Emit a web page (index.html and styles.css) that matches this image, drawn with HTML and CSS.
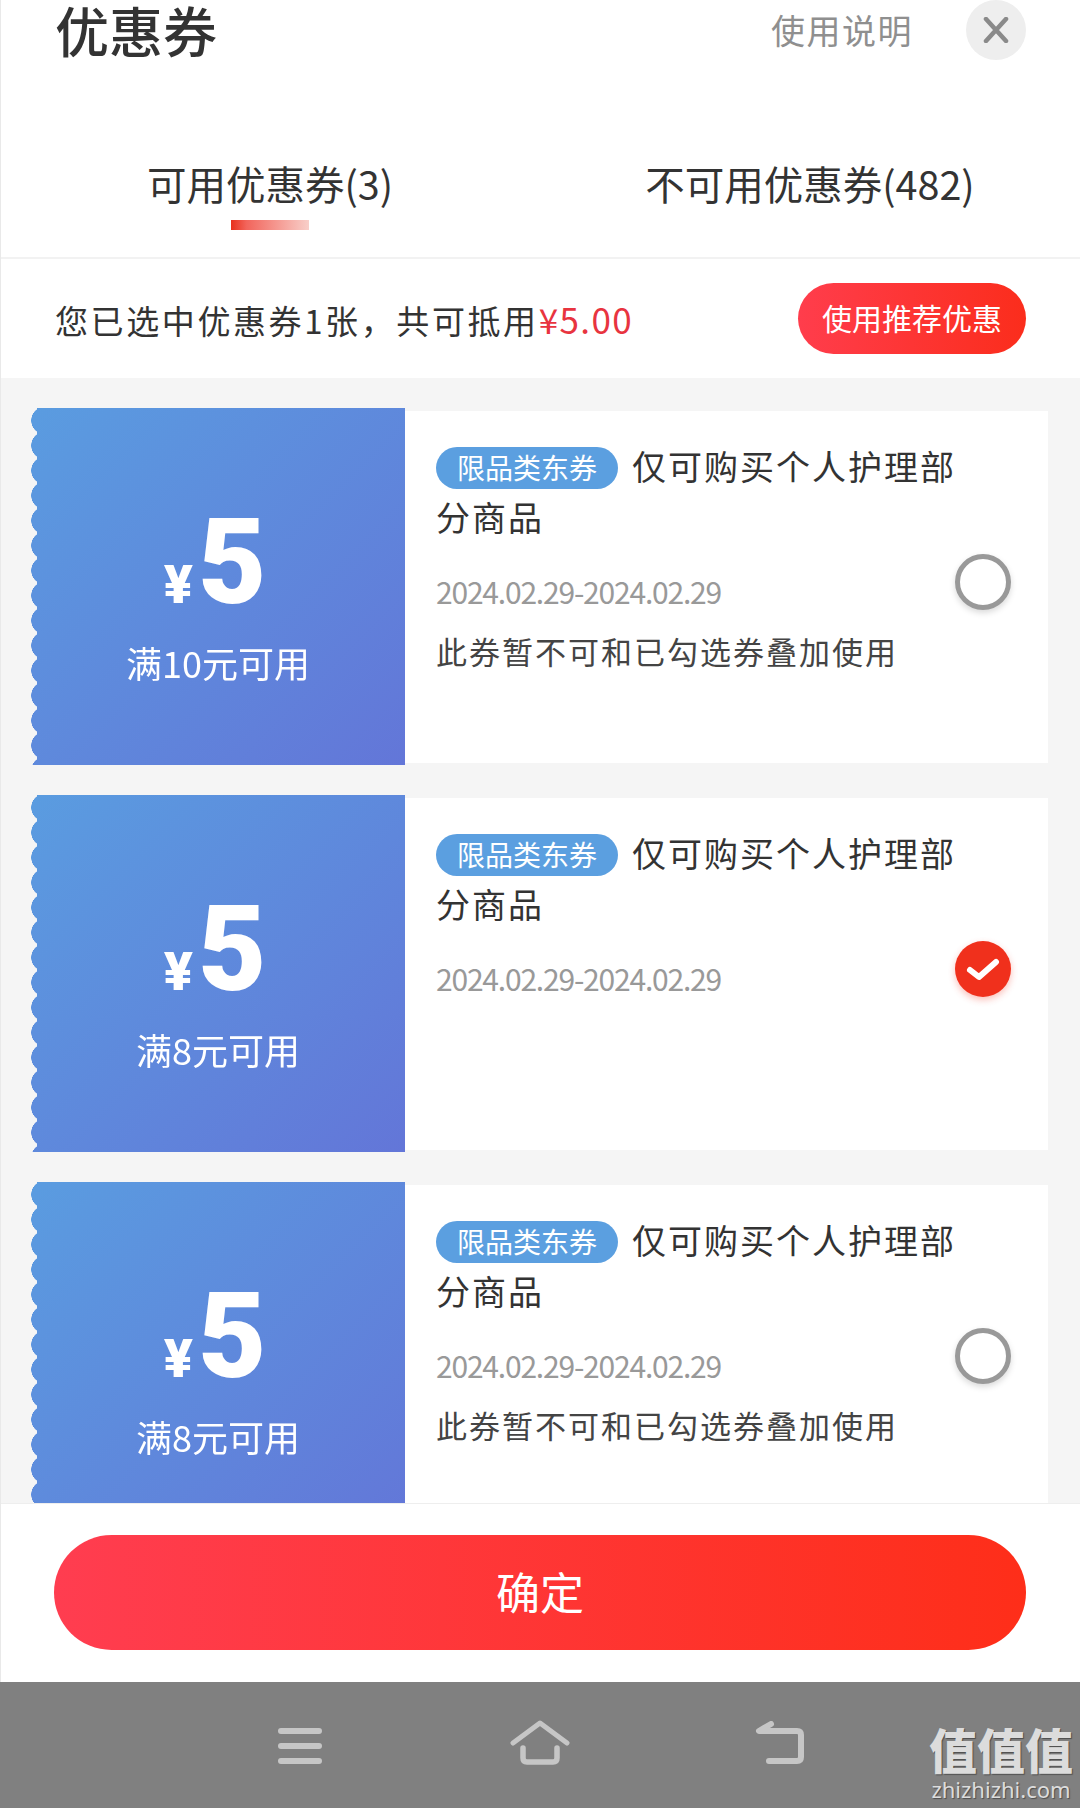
FILE: index.html
```html
<!DOCTYPE html>
<html lang="zh-CN">
<head>
  <meta charset="UTF-8" />
  <meta name="viewport" content="width=device-width, initial-scale=1" />
  <title>优惠券</title>
  <link rel="stylesheet" href="styles.css">
</head>
<body>
  <div class="page">
    <header class="head">
      <h1 class="head-title">优惠券</h1>
      <span class="head-help">使用说明</span>
      <span class="head-close">
        <svg width="26" height="26" viewBox="0 0 26 26"><path d="M3 2 L23 24 M23 2 L3 24" fill="none" stroke="#8a8a8a" stroke-width="4.5" stroke-linecap="round"/></svg>
      </span>
    </header>

    <nav class="tabs">
      <div class="tab tab-active">可用优惠券(3)</div>
      <div class="tab">不可用优惠券(482)</div>
    </nav>

    <div class="summary">
      <p class="summary-text">您已选中优惠券1张，共可抵用<em>¥5.00</em></p>
      <span class="summary-btn">使用推荐优惠</span>
    </div>

    <div class="coupon-list">
      <div class="coupon">
        <div class="ticket">
          <div class="ticket-price"><small>¥</small><b>5</b></div>
          <div class="ticket-rule">满10元可用</div>
        </div>
        <div class="coupon-body">
          <div class="coupon-info">
            <div class="coupon-name"><span class="coupon-tag">限品类东券</span><span>仅可购买个人护理部</span></div>
            <div class="coupon-name">分商品</div>
            <div class="coupon-date">2024.02.29-2024.02.29</div>
            <div class="coupon-note">此券暂不可和已勾选券叠加使用</div>
          </div>
          <span class="radio"></span>
        </div>
      </div>

      <div class="coupon">
        <div class="ticket">
          <div class="ticket-price"><small>¥</small><b>5</b></div>
          <div class="ticket-rule">满8元可用</div>
        </div>
        <div class="coupon-body">
          <div class="coupon-info">
            <div class="coupon-name"><span class="coupon-tag">限品类东券</span><span>仅可购买个人护理部</span></div>
            <div class="coupon-name">分商品</div>
            <div class="coupon-date">2024.02.29-2024.02.29</div>
          </div>
          <span class="radio radio-on">
            <svg width="34" height="26" viewBox="0 0 34 26"><path d="M4 14 L13 21 L30 6" fill="none" stroke="#fff" stroke-width="6" stroke-linecap="round" stroke-linejoin="round"/></svg>
          </span>
        </div>
      </div>

      <div class="coupon">
        <div class="ticket">
          <div class="ticket-price"><small>¥</small><b>5</b></div>
          <div class="ticket-rule">满8元可用</div>
        </div>
        <div class="coupon-body">
          <div class="coupon-info">
            <div class="coupon-name"><span class="coupon-tag">限品类东券</span><span>仅可购买个人护理部</span></div>
            <div class="coupon-name">分商品</div>
            <div class="coupon-date">2024.02.29-2024.02.29</div>
            <div class="coupon-note">此券暂不可和已勾选券叠加使用</div>
          </div>
          <span class="radio"></span>
        </div>
      </div>
    </div>

    <div class="foot">
      <div class="foot-btn">确定</div>
    </div>

    <div class="navbar">
      <span class="nav-item">
        <svg width="46" height="38" viewBox="0 0 46 38"><path d="M4 4 H42 M4 19 H42 M4 34 H42" fill="none" stroke="#c6c6c6" stroke-width="6" stroke-linecap="round"/></svg>
      </span>
      <span class="nav-item">
        <svg width="60" height="46" viewBox="0 0 60 46"><path d="M3 24 L30 4 L57 24" fill="none" stroke="#c6c6c6" stroke-width="5" stroke-linecap="round" stroke-linejoin="round"/><path d="M13 29 V39 Q13 43 17 43 H43 Q47 43 47 39 V29" fill="none" stroke="#c6c6c6" stroke-width="5.5" stroke-linecap="round"/></svg>
      </span>
      <span class="nav-item">
        <svg width="50" height="44" viewBox="0 0 50 44"><path d="M16 3 L4 10 H42 Q46 10 46 14 V36 Q46 40 42 40 H14" fill="none" stroke="#c6c6c6" stroke-width="6" stroke-linecap="round" stroke-linejoin="round"/></svg>
      </span>
      <div class="watermark">
        <div class="watermark-cn">值值值</div>
        <div class="watermark-en">zhizhizhi.com</div>
      </div>
    </div>
  </div>
</body>
</html>
```

FILE: styles.css
```css
* {
  box-sizing: border-box;
}
html, body {
  margin: 0;
  padding: 0;
}
body {
  font-family: "Noto Sans CJK SC", "Noto Sans", sans-serif;
  background-color: #fff;
  color: #333;
}
.page {
  width: 1080px;
  height: 1808px;
  display: flex;
  flex-direction: column;
  overflow: hidden;
  position: relative;
}
.page::after {
  content: "";
  position: absolute;
  left: 0;
  top: 0;
  width: 1px;
  height: 1682px;
  background: #e9e9e9;
}

/* header */
.head {
  display: flex;
  align-items: center;
  height: 59px;
  padding: 0 54px 0 55px;
}
.head-title {
  margin: 0;
  flex: 1;
  font-size: 54px;
  font-weight: 500;
  line-height: 59px;
  color: #333;
}
.head-help {
  font-size: 34px;
  letter-spacing: 1.5px;
  color: #8f8f8f;
  margin-right: 53px;
}
.head-close {
  width: 60px;
  height: 60px;
  border-radius: 50%;
  background: #eee;
  display: flex;
  align-items: center;
  justify-content: center;
}

/* tabs */
.tabs {
  display: grid;
  grid-template-columns: 1fr 1fr;
  height: 200px;
  padding-top: 94px;
  border-bottom: 2px solid #f2f2f2;
}
.tab {
  position: relative;
  text-align: center;
  font-size: 39.5px;
  line-height: 60px;
  color: #333;
}
.tab-active::after {
  content: "";
  position: absolute;
  left: 50%;
  top: 67px;
  width: 78px;
  height: 10px;
  margin-left: -39px;
  background: linear-gradient(90deg, #e8301c 0, #f2655c 20%, #f8cfc9 100%);
}

/* selected summary */
.summary {
  display: flex;
  align-items: center;
  justify-content: space-between;
  height: 119px;
  padding: 0 54px 0 55px;
}
.summary-text {
  margin: 0;
  font-size: 33px;
  letter-spacing: 2.6px;
  color: #333;
}
.summary-text em {
  font-style: normal;
  font-size: 35px;
  color: #e8343f;
  letter-spacing: 1.4px;
}
.summary-btn {
  width: 228px;
  height: 71px;
  line-height: 68px;
  text-align: center;
  border-radius: 36px;
  font-size: 30px;
  color: #fff;
  background: linear-gradient(90deg, #ff3d4c, #fb2d1c);
}

/* coupons */
.coupon-list {
  flex: 1;
  min-height: 0;
  overflow: hidden;
  background: #f5f5f5;
  padding: 30px 32px 0 31px;
  display: flex;
  flex-direction: column;
  gap: 30px;
}
.coupon {
  flex: none;
  height: 357px;
  display: flex;
  align-items: center;
}
.ticket {
  width: 374px;
  height: 357px;
  flex: none;
  padding-top: 95px;
  text-align: center;
  color: #fff;
  background: linear-gradient(135deg, #5a9ce0 0%, #6376d8 100%);
  -webkit-mask: linear-gradient(#000 0 0) 6px 0 / 100% 100% no-repeat,
    radial-gradient(circle at 14px 12.5px, #000 13.5px, transparent 14px) 0 0 / 6px 25px repeat-y;
  mask: linear-gradient(#000 0 0) 6px 0 / 100% 100% no-repeat,
    radial-gradient(circle at 14px 12.5px, #000 13.5px, transparent 14px) 0 0 / 6px 25px repeat-y;
}
.ticket-price {
  height: 120px;
  line-height: 120px;
  padding-right: 6px;
  font-family: Roboto, "Liberation Sans", sans-serif;
  font-weight: 900;
}
.ticket-price small {
  font-size: 54px;
  margin-right: 5px;
}
.ticket-price b {
  font-size: 118px;
  font-weight: 900;
}
.ticket-rule {
  margin-top: 14px;
  font-size: 36px;
  line-height: 50px;
}
.coupon-body {
  flex: 1;
  min-width: 0;
  height: 352px;
  background: #fff;
  display: flex;
  padding: 29px 37px 0 31px;
}
.coupon-info {
  flex: 1;
  min-width: 0;
}
.coupon-name {
  display: flex;
  align-items: center;
  font-size: 34px;
  letter-spacing: 2px;
  height: 51px;
  line-height: 51px;
  color: #333;
  white-space: nowrap;
}
.coupon-tag {
  height: 42px;
  line-height: 40px;
  padding: 0 21px;
  margin-top: 5px;
  margin-right: 14px;
  border-radius: 21px;
  font-size: 28px;
  letter-spacing: 0;
  color: #fff;
  background: #5b9fe0;
}
.coupon-date {
  margin-top: 27px;
  font-size: 30px;
  letter-spacing: -1.2px;
  line-height: 44px;
  color: #999;
}
.coupon-note {
  margin-top: 16px;
  font-size: 31px;
  letter-spacing: 2px;
  line-height: 44px;
  color: #444;
}
.radio {
  flex: none;
  width: 56px;
  height: 56px;
  margin-top: 114px;
  border: 5px solid #999;
  border-radius: 50%;
  background: #fff;
  box-shadow: 0 3px 6px rgba(0,0,0,0.15);
}
.radio-on {
  border: none;
  background: #f0301c;
  display: flex;
  align-items: center;
  justify-content: center;
  box-shadow: 0 3px 7px rgba(240,48,28,0.3);
}

/* confirm */
.foot {
  flex: none;
  height: 179px;
  padding: 31px 54px 0;
  background: #fff;
  border-top: 1px solid #eee;
}
.foot-btn {
  height: 115px;
  line-height: 112px;
  text-align: center;
  border-radius: 58px;
  font-size: 44px;
  color: #fff;
  background: linear-gradient(90deg, #ff3d50 0%, #fe2e19 100%);
}

/* system bar */
.navbar {
  flex: none;
  height: 126px;
  background: #808080;
  display: flex;
  justify-content: center;
  align-items: flex-end;
  padding-bottom: 43px;
  position: relative;
}
.nav-item {
  width: 240px;
  display: flex;
  justify-content: center;
}
.watermark {
  position: absolute;
  left: 928px;
  top: 38px;
  width: 146px;
  text-align: center;
  color: #dcdcdc;
  text-shadow: 1px 1px 1px rgba(0,0,0,0.4);
}
.watermark-cn {
  font-size: 48px;
  font-weight: 900;
  line-height: 56px;
}
.watermark-en {
  font-size: 22px;
  line-height: 26px;
  font-family: "Noto Sans", sans-serif;
}
```
